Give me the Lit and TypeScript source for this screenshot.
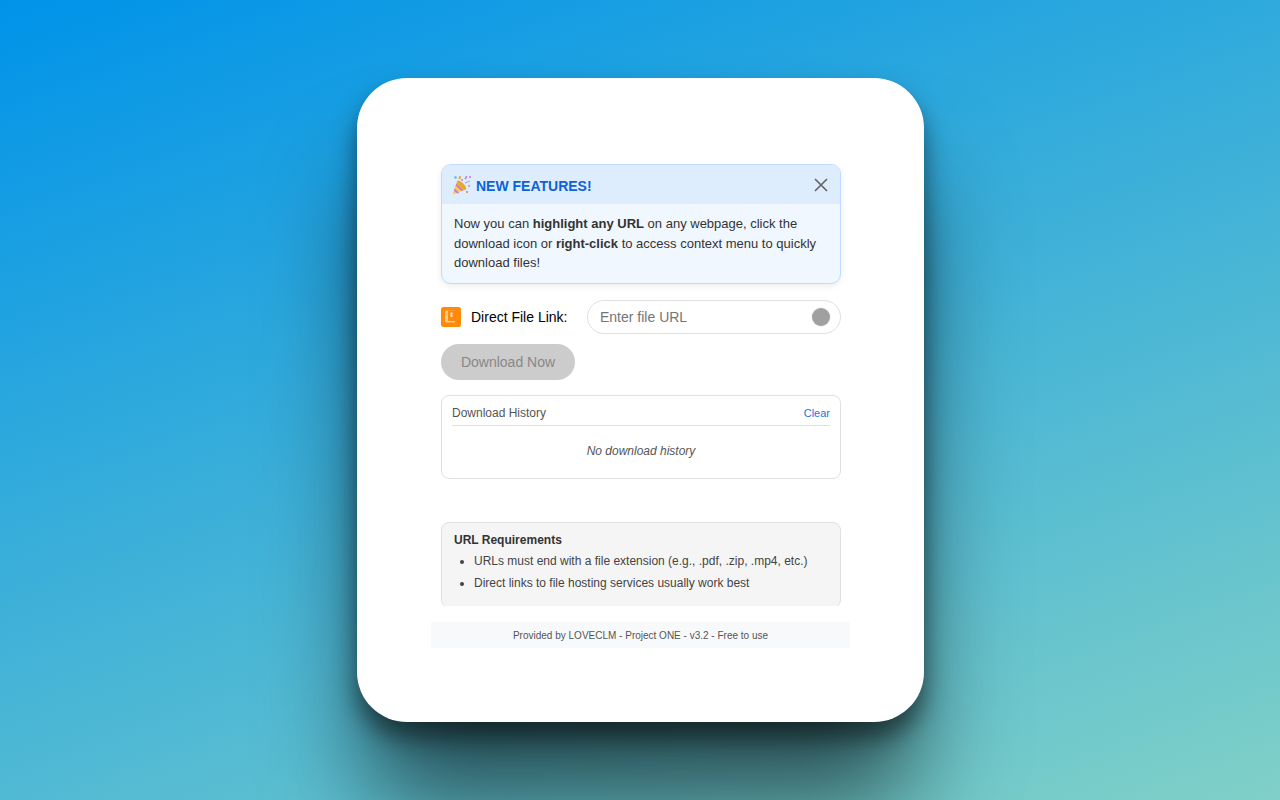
import { LitElement, html, css } from "lit";
import { customElement } from "lit/decorators.js";

@customElement("app-root")
export class AppRoot extends LitElement {
  static styles = css`
    :host {
      display: flex;
      width: 100%;
      height: 800px;
      overflow: hidden;
      align-items: center;
      justify-content: center;
      background: linear-gradient(160deg, #0093e9 0%, #80d0c7 100%);
      font-family: "Liberation Sans", Arial, sans-serif;
    }
    .window {
      box-sizing: border-box;
      width: 567px;
      height: 644px;
      margin-left: 1px;
      padding: 86px 74px 74px;
      background: #fff;
      border-radius: 50px;
      box-shadow: 0 90px 100px -10px rgba(0, 0, 0, 0.6), 0 16px 24px rgba(0, 0, 0, 0.5);
      display: flex;
      flex-direction: column;
    }
    .scroll {
      box-sizing: border-box;
      height: 442px;
      overflow: hidden;
      padding: 0 9px 0 10px;
      margin-bottom: 16px;
      flex: none;
    }
    .banner {
      box-sizing: border-box;
      height: 120px;
      border: 1px solid #bfdbfe;
      border-radius: 10px;
      background: #f0f7ff;
      box-shadow: 0 2px 6px rgba(0, 0, 0, 0.08);
      overflow: hidden;
      margin-bottom: 16px;
    }
    .banner-head {
      height: 39px;
      background: #deedfe;
      display: flex;
      align-items: center;
      justify-content: space-between;
      padding: 0 11px 0 11px;
    }
    .banner-title {
      display: flex;
      align-items: center;
      gap: 4px;
      color: #0b63d6;
      font-size: 14px;
      font-weight: 700;
    }
    .banner-title span { padding-top: 2px; }
    .popper { display: block; margin-left: -1px; }
    .close { display: block; }
    .banner-body {
      padding: 10px 12px 0;
      font-size: 13px;
      line-height: 19.5px;
      color: #333;
    }
    .link-row {
      display: flex;
      align-items: center;
      height: 34px;
      margin-bottom: 10px;
    }
    .app-icon { display: block; flex: none; }
    .label {
      margin-left: 10px;
      width: 116px;
      flex: none;
      font-size: 14px;
      color: #000;
    }
    .input {
      box-sizing: border-box;
      flex: 1;
      height: 34px;
      border: 1px solid #e0e0e0;
      border-radius: 17px;
      display: flex;
      align-items: center;
      justify-content: space-between;
      padding: 0 10px 0 12px;
      font-size: 14px;
      color: #757575;
    }
    .dot {
      width: 18px;
      height: 18px;
      border-radius: 50%;
      background: #a0a0a0;
      box-shadow: 0 0 2px rgba(0, 0, 0, 0.15);
    }
    .btn {
      width: 134px;
      height: 36px;
      border-radius: 18px;
      background: #cccccc;
      color: #888;
      font-size: 14px;
      display: flex;
      align-items: center;
      justify-content: center;
      margin-bottom: 15px;
    }
    .history {
      box-sizing: border-box;
      height: 84px;
      border: 1px solid #e0e0e0;
      border-radius: 8px;
      padding: 0 10px;
      margin-bottom: 43px;
    }
    .history-head {
      box-sizing: border-box;
      height: 30px;
      padding-top: 4px;
      border-bottom: 1px solid #e0e0e0;
      display: flex;
      align-items: center;
      justify-content: space-between;
      font-size: 12px;
      color: #555;
    }
    .clear { font-size: 11px; color: #1a73e8; }
    .empty {
      text-align: center;
      font-size: 12px;
      font-style: italic;
      color: #555;
      padding-top: 18px;
    }
    .req {
      box-sizing: border-box;
      height: 86px;
      border: 1px solid #e0e0e0;
      border-radius: 8px;
      background: #f5f5f5;
      padding: 10px 12px;
      font-size: 12px;
      color: #333;
    }
    .req-title { font-weight: 700; line-height: 14px; }
    .req ul { margin: 7px 0 0; padding: 0 0 0 20px; color: #444; }
    .req li { line-height: 14px; margin-bottom: 8px; }
    .footer {
      height: 26px;
      flex: none;
      background: #f8f9fa;
      display: flex;
      align-items: center;
      justify-content: center;
      font-size: 10px;
      color: #555;
    }
  `;

  render() {
    return html`
      <div class="window">
        <div class="scroll">
          <div class="banner">
            <div class="banner-head">
              <div class="banner-title">
                <svg class="popper" width="20" height="20" viewBox="0 0 20 20">
                  <path d="M0.5 19.5 L5 6 L14 14.5 Z" fill="#f8cf3f" />
                  <path d="M2.6 13.4 L7.4 18 L5 18.6 L2 15.6 Z" fill="#c77ad8" />
                  <path d="M4.4 8.6 L11.6 15.4 L9.6 16 L3.7 10.8 Z" fill="#c77ad8" />
                  <ellipse cx="9.6" cy="10.2" rx="2.4" ry="6" transform="rotate(-45 9.6 10.2)" fill="#e8a92f" />
                  <circle cx="3.5" cy="2.5" r="1.3" fill="#6fb0ea" />
                  <circle cx="10" cy="5" r="1" fill="#e87fb0" />
                  <rect x="7" y="1" width="2" height="3" fill="#f2a33a" transform="rotate(20 8 2)" />
                  <rect x="13" y="1" width="1.6" height="3.4" fill="#c77ad8" transform="rotate(30 14 3)" />
                  <circle cx="18" cy="2" r="1" fill="#c77ad8" />
                  <path d="M13 8 L18 6" stroke="#8fc0ec" stroke-width="1.2" />
                  <circle cx="17" cy="11" r="1" fill="#e87fb0" />
                  <rect x="14" y="16" width="2" height="2" fill="#e7a04a" />
                </svg>
                <span>NEW FEATURES!</span>
              </div>
              <svg class="close" width="16" height="16" viewBox="0 0 16 16">
                <path d="M2 2 L14 14 M14 2 L2 14" stroke="#666" stroke-width="1.7" fill="none" />
              </svg>
            </div>
            <div class="banner-body">
              Now you can <b>highlight any URL</b> on any webpage, click the download icon or
              <b>right-click</b> to access context menu to quickly download files!
            </div>
          </div>
          <div class="link-row">
            <svg class="app-icon" width="20" height="20" viewBox="0 0 20 20">
              <rect width="20" height="20" rx="2.5" fill="#ff8a0a" />
              <path d="M4 5 A1.5 1.5 0 0 1 5.5 3.5 H14 V15.5 H5.5 A1.5 1.5 0 0 1 4 14 Z" fill="#ffc98a" />
              <path d="M7 3.5 H15 A1 1 0 0 1 16 4.5 V13 A1 1 0 0 1 15 14 H7 Z" fill="#ff8a0a" />
              <rect x="9.5" y="5.5" width="2" height="4.5" fill="#ffe3c0" />
            </svg>
            <div class="label">Direct File Link:</div>
            <div class="input">
              <span>Enter file URL</span>
              <span class="dot"></span>
            </div>
          </div>
          <div class="btn">Download Now</div>
          <div class="history">
            <div class="history-head">
              <span>Download History</span>
              <span class="clear">Clear</span>
            </div>
            <div class="empty">No download history</div>
          </div>
          <div class="req">
            <div class="req-title">URL Requirements</div>
            <ul>
              <li>URLs must end with a file extension (e.g., .pdf, .zip, .mp4, etc.)</li>
              <li>Direct links to file hosting services usually work best</li>
            </ul>
          </div>
        </div>
        <div class="footer">Provided by LOVECLM - Project ONE - v3.2 - Free to use</div>
      </div>
    `;
  }
}
